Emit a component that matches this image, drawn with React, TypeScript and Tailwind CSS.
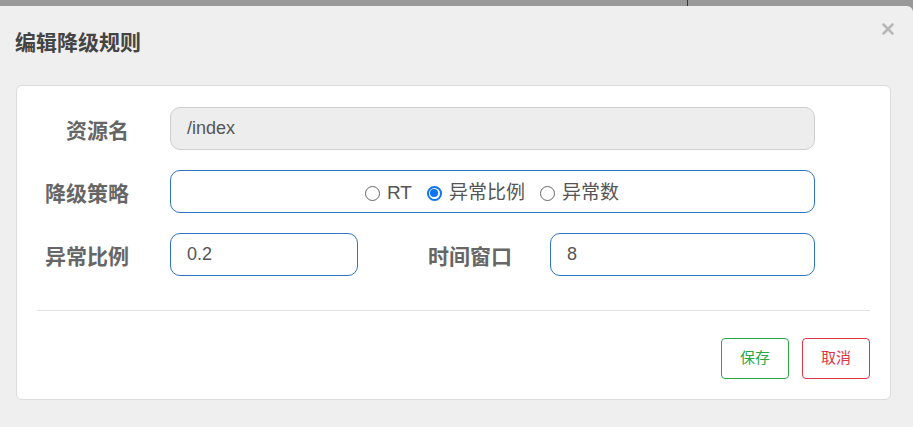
import { X } from 'lucide-react'

const cjk = "font-['Liberation_Sans','Noto_Sans_CJK_SC',sans-serif]"

export default function App() {
  return (
    <div className={`flex h-[427px] w-[913px] flex-col overflow-hidden bg-[#999] ${cjk}`}>
      {/* backdrop strip */}
      <div className="flex h-[6px] shrink-0">
        <div className="w-[687px]" />
        <div className="w-px bg-[#1e3a5f]" />
      </div>

      {/* modal */}
      <div className="flex flex-1 flex-col rounded-tr-[6px] bg-[#efefef]">
        <div className="flex items-start justify-between pl-[15px] pr-[16px] pt-[14px]">
          <h2 className="mt-[3px] text-[21px] font-bold leading-[40px] text-[#444]">编辑降级规则</h2>
          <X className="h-[18px] w-[18px] text-[#b8b8b8]" strokeWidth={3.4} />
        </div>

        <div className="ml-[16px] mr-[22px] mt-[22px] h-[315px] rounded-[6px] border border-[#dcdcdc] bg-white px-[20px] pt-[21px]">
          <div className="flex flex-col gap-[20px]">
            <Row label="资源名">
              <div className="flex h-[43px] w-[645px] items-center rounded-[10px] border border-[#cfcfcf] bg-[#ededed] px-[16px] text-[18px] text-[#555]">
                /index
              </div>
            </Row>

            <Row label="降级策略">
              <div className="flex h-[43px] w-[645px] items-center justify-center rounded-[10px] border border-[#2f74c0] pl-[14px] pt-[3px] text-[19px] text-[#555]">
                <Radio label="RT" />
                <Radio label="异常比例" checked />
                <Radio label="异常数" />
              </div>
            </Row>

            <Row label="异常比例">
              <div className="flex h-[43px] w-[188px] items-center rounded-[10px] border border-[#2f74c0] px-[16px] text-[18px] text-[#555]">
                0.2
              </div>
              <div className="ml-[70px] w-[84px] pt-[4px] text-[21px] font-bold text-[#666]">时间窗口</div>
              <div className="ml-[38px] flex h-[43px] w-[265px] items-center rounded-[10px] border border-[#2f74c0] px-[16px] text-[18px] text-[#555]">
                8
              </div>
            </Row>
          </div>

          <div className="mt-[34px] border-t border-[#e2e2e2]" />

          <div className="mt-[27px] flex justify-end gap-[13px]">
            <button className="h-[41px] w-[68px] rounded-[4px] border border-[#28a745] bg-white text-[15px] text-[#28a745]">
              保存
            </button>
            <button className="h-[41px] w-[68px] rounded-[4px] border border-[#dc3545] bg-white text-[15px] text-[#dc3545]">
              取消
            </button>
          </div>
        </div>
      </div>
    </div>
  )
}

function Row({ label, children }: { label: string; children: React.ReactNode }) {
  return (
    <div className="flex items-center">
      <div className="w-[92px] pt-[4px] text-right text-[21px] font-bold text-[#666]">{label}</div>
      <div className="ml-[41px] flex items-center">{children}</div>
    </div>
  )
}

function Radio({ label, checked }: { label: string; checked?: boolean }) {
  return (
    <span className="mr-[15px] flex items-center gap-[7px]">
      {checked ? (
        <span className="flex h-[15px] w-[15px] items-center justify-center rounded-full bg-[#0b74f0]">
          <span className="flex h-[11px] w-[11px] items-center justify-center rounded-full bg-white">
            <span className="h-[8px] w-[8px] rounded-full bg-[#0b74f0]" />
          </span>
        </span>
      ) : (
        <span className="h-[15px] w-[15px] rounded-full border border-[#666]" />
      )}
      <span>{label}</span>
    </span>
  )
}
